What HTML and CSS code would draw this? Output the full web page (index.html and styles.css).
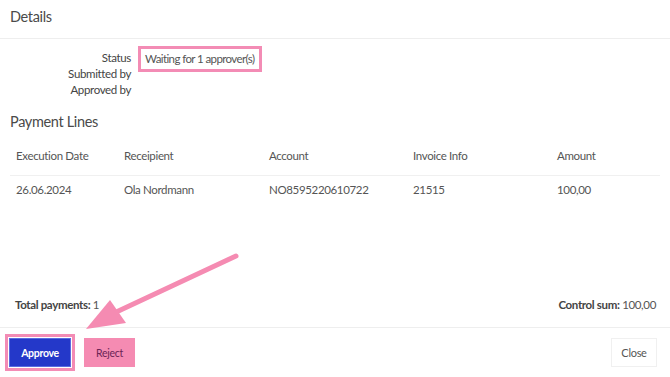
FILE: index.html
```html
<!DOCTYPE html>
<html lang="en">
<head>
    <meta charset="UTF-8">
    <meta name="viewport" content="width=device-width, initial-scale=1.0">
    <title>Payment details</title>
    <link rel="stylesheet" href="styles.css">
</head>
<body>
    <div class="modal">
        <div class="modal-header">
            <h2>Details</h2>
        </div>

        <div class="details">
            <div class="detail-labels">
                <span>Status</span>
                <span>Submitted by</span>
                <span>Approved by</span>
            </div>
            <div class="detail-values">
                <span class="status-box">Waiting for 1 approver(s)</span>
            </div>
        </div>

        <h2 class="section-title">Payment Lines</h2>

        <table class="lines">
            <thead>
                <tr>
                    <th class="col-date">Execution Date</th>
                    <th class="col-rec">Receipient</th>
                    <th class="col-acc">Account</th>
                    <th class="col-inv">Invoice Info</th>
                    <th>Amount</th>
                </tr>
            </thead>
            <tbody>
                <tr>
                    <td>26.06.2024</td>
                    <td>Ola Nordmann</td>
                    <td>NO8595220610722</td>
                    <td>21515</td>
                    <td>100,00</td>
                </tr>
            </tbody>
        </table>

        <div class="totals">
            <span><b>Total payments:</b> 1</span>
            <span><b>Control sum:</b> 100,00</span>
        </div>

        <div class="modal-footer">
            <div class="footer-left">
                <span class="highlight">
                    <button class="btn btn-approve">Approve</button>
                </span>
                <button class="btn btn-reject">Reject</button>
            </div>
            <button class="btn btn-close">Close</button>
        </div>

        <!-- Pil som peker på Approve -->
        <svg class="arrow" width="670" height="377" viewBox="0 0 670 377">
            <line x1="236" y1="256" x2="112" y2="314" stroke="#f58bb2" stroke-width="5" stroke-linecap="round"/>
            <polygon points="86,329 110,300 126,323" fill="#f58bb2"/>
        </svg>
    </div>
</body>
</html>
```

FILE: styles.css
```css
* {
    margin: 0;
    padding: 0;
    box-sizing: border-box;
}

body {
    font-family: 'Lato', 'Noto Sans', sans-serif;
    letter-spacing: -0.35px;
    color: #555;
    background: #fff;
    width: 670px;
    height: 377px;
    overflow: hidden;
}

.modal {
    position: relative;
    height: 377px;
    display: flex;
    flex-direction: column;
}

/* Topp */
.modal-header {
    height: 39px;
    border-bottom: 1px solid #eeeeee;
    padding: 8px 10px 0;
}

h2 {
    font-size: 14.5px;
    font-weight: 400;
    color: #4a4a4a;
}

/* Detaljer */
.details {
    display: flex;
    padding-top: 7px;
}

.detail-labels {
    width: 131px;
    display: flex;
    flex-direction: column;
    align-items: flex-end;
    font-size: 11.5px;
    line-height: 16px;
    padding-top: 4px;
    color: #444;
}

.detail-values {
    padding-left: 7px;
}

.status-box {
    display: inline-block;
    border: 3px solid #f38cb5;
    padding: 2px 5px 2px 4px;
    font-size: 11.5px;
    letter-spacing: -0.6px;
    line-height: 16px;
    color: #555;
}

.section-title {
    padding: 15px 10px 0;
}

/* Tabell */
.lines {
    margin: 17px 10px 0;
    width: 650px;
    border-collapse: collapse;
    font-size: 11.5px;
    color: #555;
}

.lines th {
    font-weight: 400;
    text-align: left;
    padding: 0 6px 10px;
    height: 28px;
    border-bottom: 1px solid #f0f0f0;
}

.lines td {
    padding: 7px 6px;
}

.col-date { width: 108px; }
.col-rec { width: 145px; }
.col-acc { width: 144px; }
.col-inv { width: 144px; }

/* Totaler */
.totals {
    margin-top: auto;
    display: flex;
    justify-content: space-between;
    padding: 0 14px 16px 15px;
    font-size: 11.5px;
    color: #555;
}

.totals b {
    font-weight: 700;
    color: #444;
}

/* Bunn */
.modal-footer {
    border-top: 1px solid #eeeeee;
    height: 50px;
    display: flex;
    justify-content: space-between;
    align-items: center;
    padding: 0 13px 0 5px;
}

.footer-left {
    display: flex;
    align-items: center;
    gap: 9px;
}

.highlight {
    display: flex;
    border: 3px solid #f38cb5;
    padding: 1px;
}

.btn {
    font-family: inherit;
    letter-spacing: -0.3px;
    font-size: 10.5px;
    height: 29px;
    border: none;
    cursor: pointer;
}

.btn-approve {
    width: 62px;
    background: #2438c9;
    color: #fff;
    font-weight: 700;
    border: 1px solid #5a6ae0;
}

.btn-reject {
    width: 51px;
    background: #f58bb2;
    color: #6b2456;
}

.btn-close {
    width: 46px;
    background: #fff;
    color: #555;
    font-size: 11px;
    border: 1px solid #f0f0f0;
}

/* Pil over innholdet */
.arrow {
    position: absolute;
    top: 0;
    left: 0;
    pointer-events: none;
}
```
